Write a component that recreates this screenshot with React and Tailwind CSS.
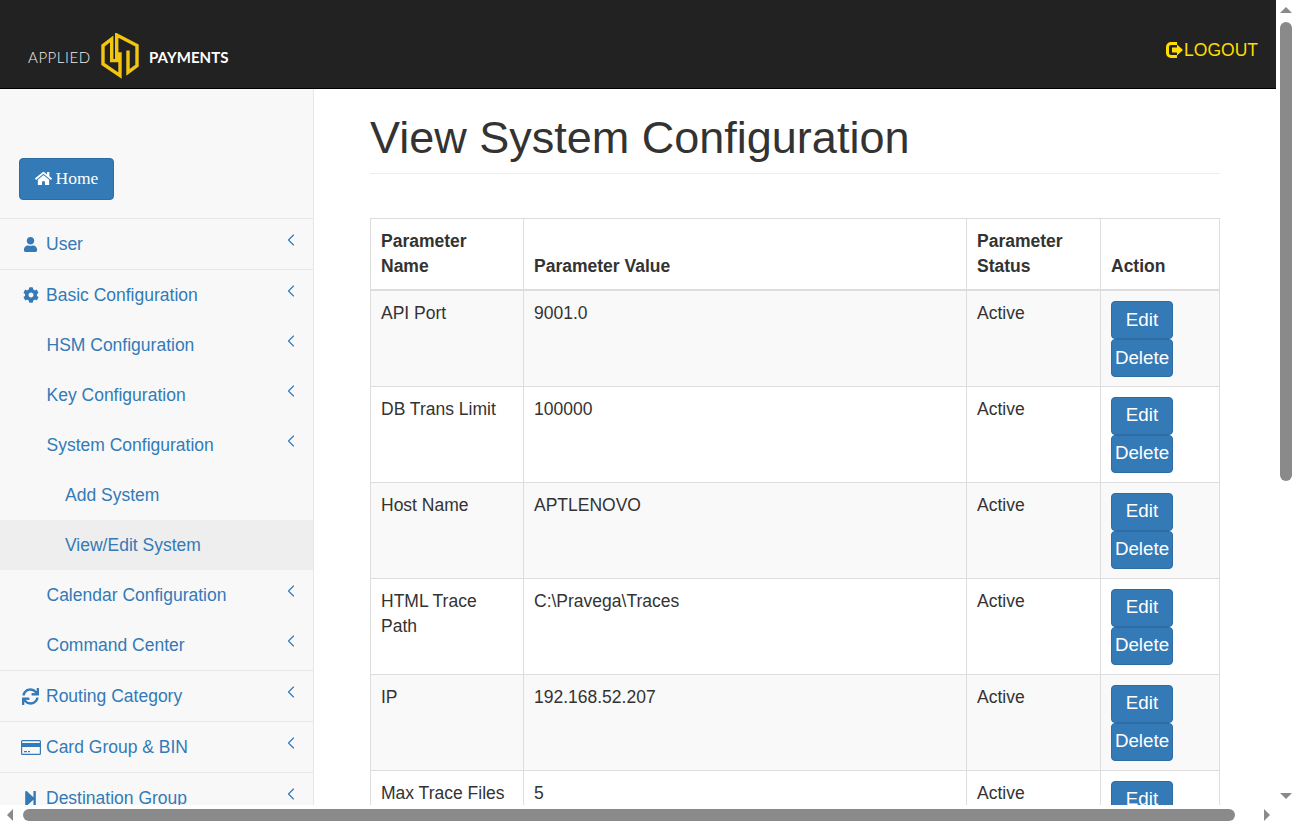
import { FaHome, FaUser, FaCog, FaSync, FaStepForward } from 'react-icons/fa';
import { ChevronLeft } from 'lucide-react';

const rows = [
  ['API Port', '9001.0'],
  ['DB Trans Limit', '100000'],
  ['Host Name', 'APTLENOVO'],
  ['HTML Trace Path', 'C:\\Pravega\\Traces'],
  ['IP', '192.168.52.207'],
  ['Max Trace Files', '5'],
];

function Logo() {
  return (
    <svg width="38" height="46" viewBox="0 0 38 46" fill="none" stroke="#f2c511" strokeWidth="3.4">
      <path d="M19 19.300V42.600L2 31V12.600L10.700 6V27.600H15.700V2L36 12.600V32.600L27 39.300V17.600" />
    </svg>
  );
}

function CardIcon() {
  return (
    <svg width="20" height="15" viewBox="0 0 20 15" fill="currentColor">
      <path fillRule="evenodd" d="M1.500 0h17A1.500 1.500 0 0 1 20 1.500v12a1.500 1.500 0 0 1-1.500 1.500h-17A1.500 1.500 0 0 1 0 13.500v-12A1.500 1.500 0 0 1 1.500 0zM1.200 1.200v1.800h17.600v-1.800zM1.200 7v6.800h17.600V7z" />
      <path d="M3 11h3v1.200H3zM7 11h2v1.200H7z" />
    </svg>
  );
}

function LogoutIcon() {
  return (
    <svg width="18" height="16" viewBox="0 0 18 16" fill="#ffdd00">
      <path d="M5 0h6v3H5a2 2 0 0 0-2 2v6a2 2 0 0 0 2 2h6v3H5a5 5 0 0 1-5-5V5a5 5 0 0 1 5-5z" />
      <path d="M6 5.500h5V2.500l6 5.500-6 5.500v-3H6z" />
    </svg>
  );
}

function NavRow({ icon, label, active, level = 0, border, arrow = true }) {
  return (
    <div
      className={`relative flex h-[50px] shrink-0 items-center text-[17.5px] text-[#337ab7] ${
        active ? 'bg-[#eeeeee]' : ''
      } ${border ? 'box-content border-b border-[#e7e7e7]' : ''} ${
        level === 2 ? 'pl-[65px]' : level === 1 ? 'pl-[46.5px]' : 'pl-[21px]'
      }`}
    >
      {icon && <span className="flex w-[25px] shrink-0 justify-start">{icon}</span>}
      <span>{label}</span>
      {arrow && (
        <ChevronLeft size={20} strokeWidth={1.4} className="absolute top-[11px] right-[12px]" />
      )}
    </div>
  );
}

function Sidebar() {
  return (
    <aside className="flex w-[314px] shrink-0 flex-col border-r border-[#e7e7e7] bg-[#f8f8f8]">
      <div className="h-[130px] shrink-0 border-b border-[#e7e7e7] pt-[69px] pl-[19px]">
        <button className="flex h-[42px] w-[95px] items-center justify-center gap-[4px] rounded-[4px] border border-[#2e6da4] bg-[#337ab7] pb-[2px] font-['Liberation_Serif',serif] text-[17.5px] text-white">
          <FaHome className="text-[17px]" />
          Home
        </button>
      </div>
      <NavRow border icon={<FaUser className="ml-[2px] text-[15px]" />} label="User" />
      <NavRow icon={<FaCog className="ml-[2px] text-[16px]" />} label="Basic Configuration" />
      <NavRow level={1} label="HSM Configuration" />
      <NavRow level={1} label="Key Configuration" />
      <NavRow level={1} label="System Configuration" />
      <NavRow level={2} arrow={false} label="Add System" />
      <NavRow level={2} arrow={false} active label="View/Edit System" />
      <NavRow level={1} label="Calendar Configuration" />
      <NavRow level={1} border label="Command Center" />
      <NavRow border icon={<FaSync className="ml-[1px] text-[17px]" />} label="Routing Category" />
      <NavRow border icon={<CardIcon />} label="Card Group & BIN" />
      <NavRow icon={<FaStepForward className="ml-[1px] text-[17px]" />} label="Destination Group" />
    </aside>
  );
}

function ConfigTable() {
  return (
    <table className="w-[849px] shrink-0 table-fixed border-collapse border border-[#dddddd] text-[17.5px] leading-[25px] text-[#333333]">
      <colgroup>
        <col className="w-[153px]" />
        <col className="w-[443px]" />
        <col className="w-[134px]" />
        <col className="w-[119px]" />
      </colgroup>
      <thead>
        <tr className="font-bold">
          <th className="border border-b-2 border-[#dddddd] px-[10px] pt-[10px] pb-[10px] text-left align-bottom">Parameter Name</th>
          <th className="border border-b-2 border-[#dddddd] px-[10px] pt-[10px] pb-[10px] text-left align-bottom">Parameter Value</th>
          <th className="border border-b-2 border-[#dddddd] px-[10px] pt-[10px] pb-[10px] text-left align-bottom">Parameter Status</th>
          <th className="border border-b-2 border-[#dddddd] px-[10px] pt-[10px] pb-[10px] text-left align-bottom">Action</th>
        </tr>
      </thead>
      <tbody>
        {rows.map(([name, value], i) => (
          <tr key={name} className={`h-[96px] ${i % 2 === 0 ? 'bg-[#f9f9f9]' : ''}`}>
            <td className="border border-[#dddddd] px-[10px] pt-[10px] align-top">{name}</td>
            <td className="border border-[#dddddd] px-[10px] pt-[10px] align-top">{value}</td>
            <td className="border border-[#dddddd] px-[10px] pt-[10px] align-top">Active</td>
            <td className="border border-[#dddddd] px-[10px] pt-[10px] align-top">
              <button className="block h-[38px] w-[62px] rounded-[4px] border border-[#2e6da4] bg-[#337ab7] pb-[2px] text-center text-[18.75px] text-white">Edit</button>
              <button className="block h-[38px] w-[62px] rounded-[4px] border border-[#2e6da4] bg-[#337ab7] pb-[2px] text-center text-[18.75px] text-white">Delete</button>
            </td>
          </tr>
        ))}
      </tbody>
    </table>
  );
}

function Scrollbars({ children }) {
  return (
    <div className="flex h-screen w-screen flex-col overflow-hidden bg-white font-['Liberation_Sans',Arial,sans-serif]">
      <div className="flex min-h-0 flex-1">
        <div className="flex min-w-0 flex-1 flex-col overflow-hidden">{children}</div>
        <div className="flex w-[19px] shrink-0 flex-col items-center bg-white pt-[7px] pb-[6px] pl-[1px]">
          <div className="h-0 w-0 border-x-[6px] border-b-[6px] border-x-transparent border-b-[#8a8a8a]" />
          <div className="mt-[9px] h-[459px] w-[12px] rounded-[6px] bg-[#8a8a8a]" />
          <div className="mt-auto h-0 w-0 border-x-[6px] border-t-[6px] border-x-transparent border-t-[#8a8a8a]" />
        </div>
      </div>
      <div className="flex h-[19px] shrink-0 items-center bg-white pr-[25px] pl-[7px]">
        <div className="h-0 w-0 border-y-[6px] border-r-[6px] border-y-transparent border-r-[#8a8a8a]" />
        <div className="ml-[10px] h-[12px] w-[1212px] rounded-[6px] bg-[#8a8a8a]" />
        <div className="ml-auto h-0 w-0 border-y-[6px] border-l-[6px] border-y-transparent border-l-[#8a8a8a]" />
      </div>
    </div>
  );
}

export default function App() {
  return (
    <Scrollbars>
      <header className="flex h-[89px] shrink-0 items-end justify-between border-b border-black bg-[#222222] pr-[18px] pb-[9px] pl-[28px]">
        <div className="flex items-center font-['Lato',sans-serif] text-[15px] text-[#eeeeee]">
          <span className="mt-[3px] w-[73px] font-light tracking-[0.55px]">APPLIED</span>
          <Logo />
          <span className="mt-[3px] ml-[10px] font-bold tracking-[0.05px] text-white">PAYMENTS</span>
        </div>
        <a className="mb-[16px] flex items-center text-[17.5px] text-[#ffdd00]">
          <LogoutIcon />
          LOGOUT
        </a>
      </header>
      <div className="flex min-h-0 flex-1 overflow-hidden">
        <Sidebar />
        <main className="flex min-w-0 flex-1 flex-col px-[56px]">
          <h1 className="mt-[20px] h-[65px] w-[850px] shrink-0 border-b border-[#eeeeee] text-[45px] leading-[58px] text-[#333333]">
            View System Configuration
          </h1>
          <div className="h-[44px] shrink-0" />
          <ConfigTable />
        </main>
      </div>
    </Scrollbars>
  );
}
